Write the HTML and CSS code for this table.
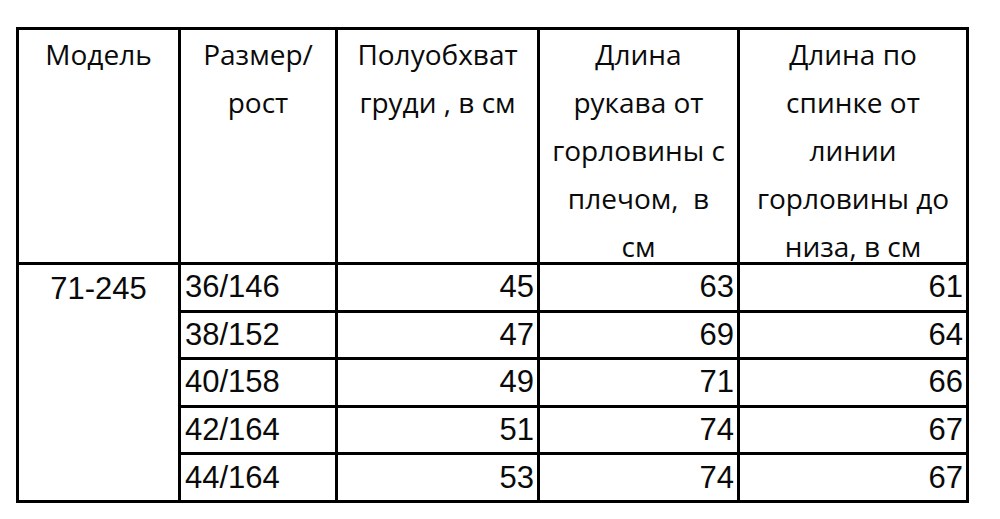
FILE: index.html
```html
<!DOCTYPE html>
<html lang="ru">
<head>
<meta charset="utf-8">
<link rel="stylesheet" href="styles.css">
</head>
<body>
<table class="sizes">
  <colgroup>
    <col class="c1"><col class="c2"><col class="c3"><col class="c4"><col class="c5">
  </colgroup>
  <thead>
    <tr class="head">
      <th><div class="hd">Модель</div></th>
      <th><div class="hd">Размер/<br>рост</div></th>
      <th><div class="hd">Полуобхват<br>груди , в см</div></th>
      <th><div class="hd">Длина<br>рукава от<br>горловины с<br>плечом,&nbsp; в<br>см</div></th>
      <th><div class="hd">Длина по<br>спинке от<br>линии<br>горловины до<br>низа, в см</div></th>
    </tr>
  </thead>
  <tbody>
    <tr><td class="model" rowspan="5">71-245</td><td class="size">36/146</td><td class="num">45</td><td class="num">63</td><td class="num">61</td></tr>
    <tr><td class="size">38/152</td><td class="num">47</td><td class="num">69</td><td class="num">64</td></tr>
    <tr><td class="size">40/158</td><td class="num">49</td><td class="num">71</td><td class="num">66</td></tr>
    <tr><td class="size">42/164</td><td class="num">51</td><td class="num">74</td><td class="num">67</td></tr>
    <tr><td class="size">44/164</td><td class="num">53</td><td class="num">74</td><td class="num">67</td></tr>
  </tbody>
</table>
</body>
</html>
```
FILE: styles.css
```css
html, body {
  margin: 0;
  padding: 0;
  background: #fff;
}
body {
  padding: 27px 0 0 16px;
}
.sizes {
  border-collapse: collapse;
  table-layout: fixed;
  width: 952px;
  color: #0a0a0a;
  border: 3px solid #000;
}
.c1 { width: 162px; }
.c2 { width: 157px; }
.c3 { width: 202px; }
.c4 { width: 200px; }
.c5 { width: 229px; }
.sizes th, .sizes td {
  border: 3px solid #000;
  padding: 0;
}
.head th {
  height: 232px;
  vertical-align: top;
  text-align: center;
  font-family: "Open Sans", "Noto Sans", sans-serif;
  font-weight: 500;
  font-size: 28px;
  line-height: 48px;
  padding: 0;
}
.hd {
  height: 232px;
  white-space: nowrap;
}
.sizes td {
  height: 44.6px;
  font-family: "Liberation Sans", Arial, sans-serif;
  font-size: 31px;
  line-height: 44px;
}
.sizes td.model {
  vertical-align: top;
  text-align: center;
  padding-top: 2px;
}
.sizes td.size {
  text-align: left;
  padding-left: 4px;
}
.sizes td.num {
  text-align: right;
  padding-right: 3px;
}
```
